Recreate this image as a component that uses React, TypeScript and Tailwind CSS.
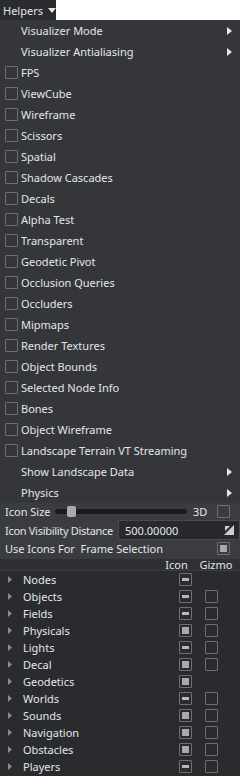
import React from 'react'

const menuItems: { label: string; type: 'sub' | 'check' }[] = [
  { label: 'Visualizer Mode', type: 'sub' },
  { label: 'Visualizer Antialiasing', type: 'sub' },
  { label: 'FPS', type: 'check' },
  { label: 'ViewCube', type: 'check' },
  { label: 'Wireframe', type: 'check' },
  { label: 'Scissors', type: 'check' },
  { label: 'Spatial', type: 'check' },
  { label: 'Shadow Cascades', type: 'check' },
  { label: 'Decals', type: 'check' },
  { label: 'Alpha Test', type: 'check' },
  { label: 'Transparent', type: 'check' },
  { label: 'Geodetic Pivot', type: 'check' },
  { label: 'Occlusion Queries', type: 'check' },
  { label: 'Occluders', type: 'check' },
  { label: 'Mipmaps', type: 'check' },
  { label: 'Render Textures', type: 'check' },
  { label: 'Object Bounds', type: 'check' },
  { label: 'Selected Node Info', type: 'check' },
  { label: 'Bones', type: 'check' },
  { label: 'Object Wireframe', type: 'check' },
  { label: 'Landscape Terrain VT Streaming', type: 'check' },
  { label: 'Show Landscape Data', type: 'sub' },
  { label: 'Physics', type: 'sub' },
]

// icon: 'part' = indeterminate bar, 'full' = checked square
const treeItems: { label: string; icon: 'part' | 'full'; gizmo: boolean }[] = [
  { label: 'Nodes', icon: 'part', gizmo: false },
  { label: 'Objects', icon: 'part', gizmo: true },
  { label: 'Fields', icon: 'part', gizmo: true },
  { label: 'Physicals', icon: 'full', gizmo: true },
  { label: 'Lights', icon: 'part', gizmo: true },
  { label: 'Decal', icon: 'full', gizmo: true },
  { label: 'Geodetics', icon: 'full', gizmo: false },
  { label: 'Worlds', icon: 'part', gizmo: true },
  { label: 'Sounds', icon: 'full', gizmo: true },
  { label: 'Navigation', icon: 'full', gizmo: true },
  { label: 'Obstacles', icon: 'full', gizmo: true },
  { label: 'Players', icon: 'part', gizmo: true },
]

function Box({ state }: { state?: 'part' | 'full' }) {
  return (
    <span className="w-[13px] h-[13px] border border-[#6e6f72] rounded-[1px] flex items-center justify-center shrink-0">
      {state === 'full' && <span className="w-[7px] h-[7px] bg-[#a8a9ab]" />}
      {state === 'part' && <span className="w-[7px] h-[3px] bg-[#b8b9bb]" />}
    </span>
  )
}

function SubArrow() {
  return (
    <svg width="5" height="8" viewBox="0 0 5 8" className="shrink-0">
      <path d="M0 0 L5 4 L0 8 Z" fill="#e6e6e6" />
    </svg>
  )
}

function TreeArrow() {
  return (
    <svg width="4" height="7" viewBox="0 0 4 7" className="shrink-0">
      <path d="M0 0 L4 3.5 L0 7 Z" fill="#8a8b8d" />
    </svg>
  )
}

export default function App() {
  return (
    <div
      className="w-[240px] h-[776px] bg-white overflow-hidden text-[11px] leading-none text-[#e2e6ec]"
      style={{ fontFamily: '"Noto Sans", "Open Sans", sans-serif' }}
    >
      {/* Botón del menú */}
      <div className="h-[20px] w-[56px] bg-[#2a2b2e] flex items-center pl-[3px] gap-[5px]">
        <span>Helpers</span>
        <svg width="8" height="5" viewBox="0 0 8 5">
          <path d="M0 0 L8 0 L4 5 Z" fill="#e6e6e6" />
        </svg>
      </div>

      {/* Menú desplegable */}
      <div className="bg-[#353639]">
        {menuItems.map((item) => (
          <div key={item.label} className="h-[21px] flex items-center pl-[5px] pr-[8px]">
            <span className="w-[16px] shrink-0 flex items-center">
              {item.type === 'check' && <Box />}
            </span>
            <span className="flex-1 whitespace-nowrap">{item.label}</span>
            {item.type === 'sub' && <SubArrow />}
          </div>
        ))}
      </div>

      {/* Ajustes de iconos */}
      <div className="bg-[#3b3c3f] pb-[2px]">
        <div className="h-[17px] flex items-center pl-[5px] pr-[10px]">
          <span className="w-[50px] whitespace-nowrap">Icon Size</span>
          <div className="relative flex-1 h-[5px] bg-[#1c1c1e] rounded-full mr-[6px]">
            <span className="absolute left-[12px] top-[-3px] w-[9px] h-[11px] bg-[#a9aaac] rounded-[2px]" />
          </div>
          <span className="w-[24px]">3D</span>
          <Box />
        </div>
        <div className="h-[20px] flex items-center pl-[5px]">
          <span className="w-[113px] whitespace-nowrap tracking-[-0.3px]">Icon Visibility Distance</span>
          <div className="flex-1 h-[20px] bg-[#28292c] border border-[#4a4b4e] flex items-center pl-[6px] pr-[5px]">
            <span className="flex-1">500.00000</span>
            <svg width="10" height="10" viewBox="0 0 10 10">
              <path d="M10 0 L10 10 L0 10 Z" fill="#cfcfcf" />
              <path d="M1 1 L6 1 L1 6 Z" fill="#cfcfcf" />
            </svg>
          </div>
        </div>
        <div className="h-[17px] flex items-center pl-[5px] pr-[10px]">
          <span className="flex-1 whitespace-nowrap">Use Icons For&nbsp; Frame Selection</span>
          <Box state="full" />
        </div>
      </div>

      {/* Tabla de helpers */}
      <div className="bg-[#2a2b2e] h-full">
        <div className="h-[12px] bg-[#2f3033] border-b border-[#3c3d40] flex items-center justify-end pr-[5px]">
          <span className="w-[41px] text-center">Icon</span>
          <span className="w-[38px] text-center">Gizmo</span>
        </div>
        {treeItems.map((item) => (
          <div key={item.label} className="h-[17px] flex items-center pl-[8px]">
            <TreeArrow />
            <span className="ml-[11px] w-[143px] whitespace-nowrap">{item.label}</span>
            <span className="w-[39px] flex justify-center">
              <Box state={item.icon} />
            </span>
            {item.gizmo && <Box />}
          </div>
        ))}
      </div>
    </div>
  )
}
